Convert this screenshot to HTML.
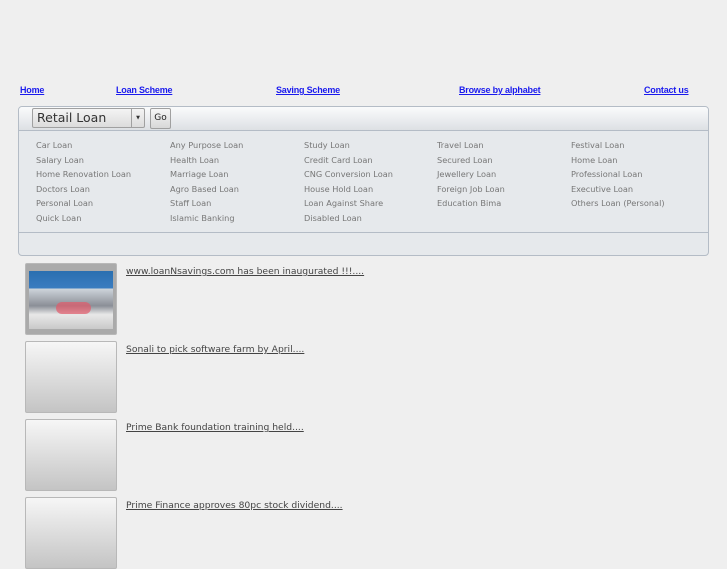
<!DOCTYPE html>
<html><head><style>
body{margin:0;width:727px;height:545px;background:#efefef;font-family:"DejaVu Sans",sans-serif;overflow:hidden;position:relative}
.nav{position:absolute;top:85px;font:bold 9px "Liberation Sans",sans-serif;color:#1a1aee;text-decoration:underline;letter-spacing:-0.2px}
.box{position:absolute;left:18px;top:106px;width:689px;height:148px;border:1px solid #b4bcc6;border-radius:4px;background:#e6e9ec;overflow:hidden}
.hd{height:23px;background:linear-gradient(#fafbfc,#dde0e4);border-bottom:1px solid #b4bcc6;position:relative}
.sel{position:absolute;left:13px;top:1px;width:107px;height:18px;border:1px solid #a0a0a0;border-radius:2px;background:linear-gradient(#f4f4f4,#dcdcdc);font-size:12.5px;color:#333;line-height:18px;padding-left:4px;box-sizing:content-box}
.arr{position:absolute;right:0;top:0;width:12px;height:18px;border-left:1px solid #a0a0a0;font-size:5px;text-align:center;line-height:18px}
.go{position:absolute;left:131px;top:1px;width:19px;height:19px;border:1px solid #a0a0a0;border-radius:2px;background:linear-gradient(#f6f6f6,#d8d8d8);font-size:9px;line-height:19px;text-align:center;color:#222}
.col{position:absolute;top:31px;font-size:8.2px;color:#777;line-height:14.5px}
.ft{position:absolute;left:0;right:0;top:125px;border-top:1px solid #b4bcc6}
.th{position:absolute;left:25px;width:90px;height:70px;border:1px solid #b8b8b8;border-radius:2px;background:linear-gradient(#f6f6f6,#c4c4c4)}
.nt{position:absolute;left:126px;font-size:9.2px;color:#444;text-decoration:underline}
</style></head><body>
<div class="nav" style="left:20px">Home</div>
<div class="nav" style="left:116px">Loan Scheme</div>
<div class="nav" style="left:276px">Saving Scheme</div>
<div class="nav" style="left:459px">Browse by alphabet</div>
<div class="nav" style="left:644px">Contact us</div>
<div class="box">
<div class="hd"><div class="sel">Retail Loan<div class="arr">▼</div></div><div class="go">Go</div></div>
<div class="col" style="left:17px">Car Loan<br>Salary Loan<br>Home Renovation Loan<br>Doctors Loan<br>Personal Loan<br>Quick Loan</div>
<div class="col" style="left:151px">Any Purpose Loan<br>Health Loan<br>Marriage Loan<br>Agro Based Loan<br>Staff Loan<br>Islamic Banking</div>
<div class="col" style="left:285px">Study Loan<br>Credit Card Loan<br>CNG Conversion Loan<br>House Hold Loan<br>Loan Against Share<br>Disabled Loan</div>
<div class="col" style="left:418px">Travel Loan<br>Secured Loan<br>Jewellery Loan<br>Foreign Job Loan<br>Education Bima</div>
<div class="col" style="left:552px">Festival Loan<br>Home Loan<br>Professional Loan<br>Executive Loan<br>Others Loan (Personal)</div>
<div class="ft"></div>
</div>
<div class="th" style="top:263px;background:#aaa"><div style="position:absolute;left:3px;top:7px;width:84px;height:58px;background:linear-gradient(#2a6fb0 0,#3a7cc0 30%,#cfd6dc 30%,#8b8f97 60%,#e8e8e8 75%,#c9c9c9)"></div><div style="position:absolute;left:30px;top:38px;width:35px;height:12px;background:#e25a6a;border-radius:6px;opacity:.7"></div></div>
<div class="nt" style="top:266px">www.loanNsavings.com has been inaugurated !!!....</div>
<div class="th" style="top:341px"></div>
<div class="nt" style="top:344px">Sonali to pick software farm by April....</div>
<div class="th" style="top:419px"></div>
<div class="nt" style="top:422px">Prime Bank foundation training held....</div>
<div class="th" style="top:497px"></div>
<div class="nt" style="top:500px">Prime Finance approves 80pc stock dividend....</div>
</body></html>
